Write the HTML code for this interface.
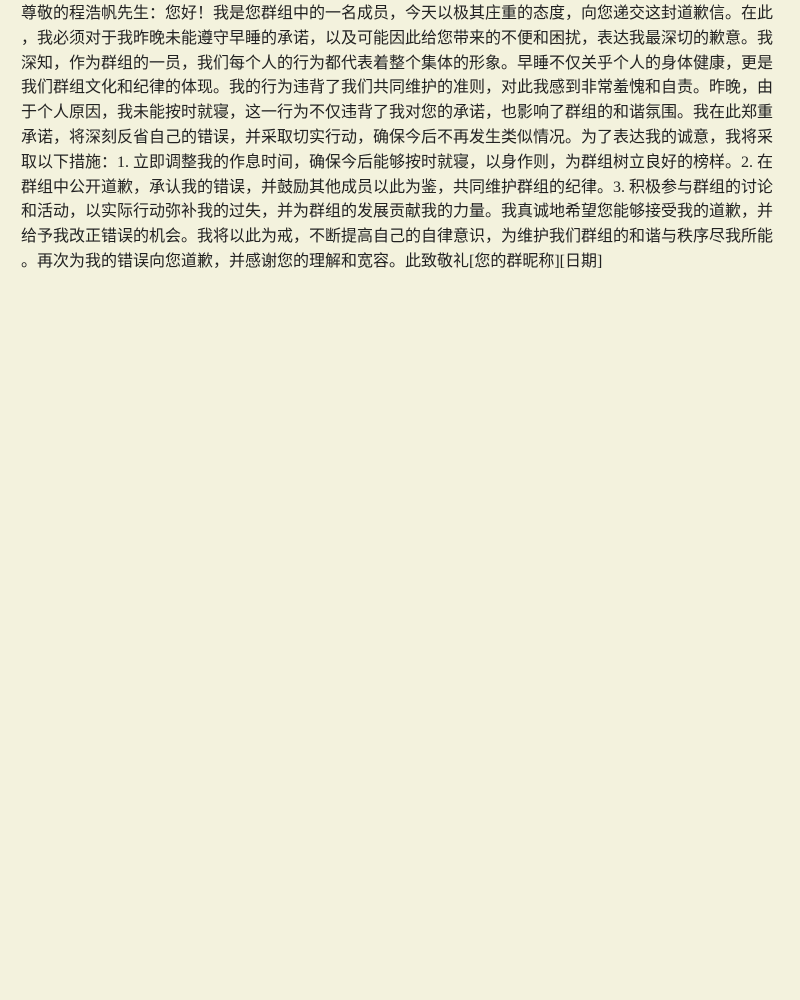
<!DOCTYPE html>
<html><head><meta charset="utf-8"><style>
html,body{margin:0;padding:0;background:#f3f2dd;width:800px;height:1000px;overflow:hidden}
.t{position:absolute;left:21px;top:2px;font-family:"Liberation Serif","WenQuanYi Zen Hei","Noto Sans CJK SC",sans-serif;font-size:16px;line-height:24.8px;color:#222;white-space:nowrap}
</style></head><body><div class="t">
尊敬的程浩帆先生：您好！我是您群组中的一名成员，今天以极其庄重的态度，向您递交这封道歉信。在此<br>
，我必须对于我昨晚未能遵守早睡的承诺，以及可能因此给您带来的不便和困扰，表达我最深切的歉意。我<br>
深知，作为群组的一员，我们每个人的行为都代表着整个集体的形象。早睡不仅关乎个人的身体健康，更是<br>
我们群组文化和纪律的体现。我的行为违背了我们共同维护的准则，对此我感到非常羞愧和自责。昨晚，由<br>
于个人原因，我未能按时就寝，这一行为不仅违背了我对您的承诺，也影响了群组的和谐氛围。我在此郑重<br>
承诺，将深刻反省自己的错误，并采取切实行动，确保今后不再发生类似情况。为了表达我的诚意，我将采<br>
取以下措施：1. 立即调整我的作息时间，确保今后能够按时就寝，以身作则，为群组树立良好的榜样。2. 在<br>
群组中公开道歉，承认我的错误，并鼓励其他成员以此为鉴，共同维护群组的纪律。3. 积极参与群组的讨论<br>
和活动，以实际行动弥补我的过失，并为群组的发展贡献我的力量。我真诚地希望您能够接受我的道歉，并<br>
给予我改正错误的机会。我将以此为戒，不断提高自己的自律意识，为维护我们群组的和谐与秩序尽我所能<br>
。再次为我的错误向您道歉，并感谢您的理解和宽容。此致敬礼[您的群昵称][日期]
</div></body></html>
